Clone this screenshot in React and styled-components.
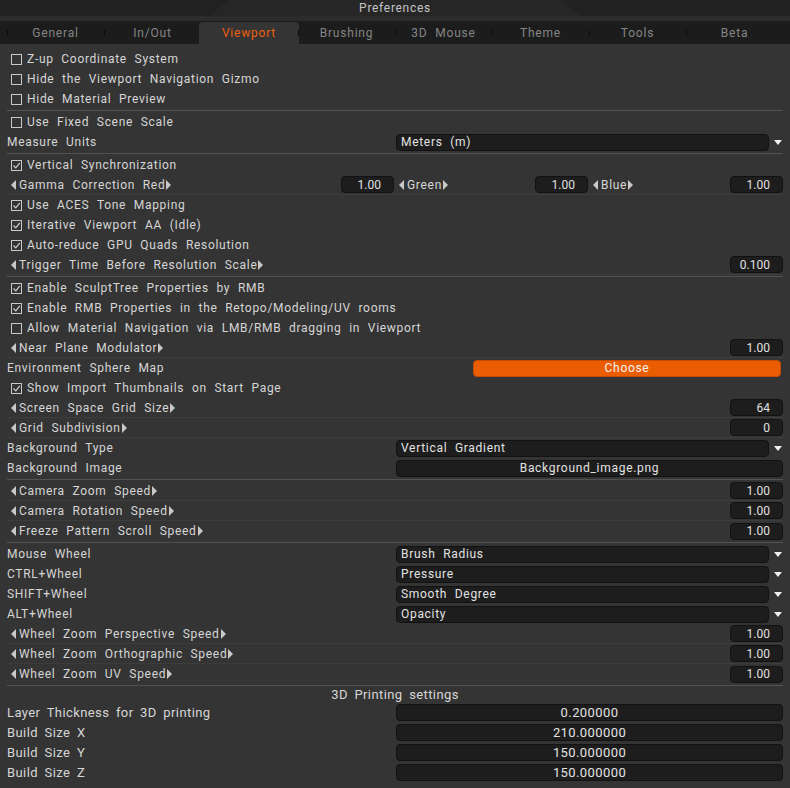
import styled, { createGlobalStyle, css } from "styled-components";

const GlobalStyle = createGlobalStyle`
  html, body {
    margin: 0;
    padding: 0;
    background: #343434;
  }
  body {
    font-family: "Roboto", "DejaVu Sans", sans-serif;
    -webkit-font-smoothing: antialiased;
  }
`;

const Window = styled.div`
  width: 790px;
  height: 788px;
  background: #343434;
  color: #d6d6d6;
  overflow: hidden;
  font-size: 12px;
  letter-spacing: 0.7px;
  word-spacing: 4px;
`;

const TitleBar = styled.div`
  height: 16px;
  background: #212121;
  display: flex;
  justify-content: center;
`;

const Title = styled.div`
  height: 16px;
  line-height: 16px;
  padding: 0 150px;
  background: #262626;
  clip-path: polygon(20px 0, calc(100% - 20px) 0, 100% 100%, 0 100%);
  color: #c4c4c4;
  font-size: 12px;
  letter-spacing: 0.7px;
`;

const TabStrip = styled.div`
  border-top: 5px solid #2c2c2c;
  height: 23px;
  background: #1c1c1c;
  display: grid;
  grid-template-columns: repeat(8, 97px);
  padding-left: 7px;
`;

const Tab = styled.div`
  position: relative;
  display: flex;
  align-items: center;
  justify-content: center;
  color: #858585;
  font-size: 12px;
  letter-spacing: 0.8px;

  &::before {
    content: "";
    position: absolute;
    left: 0;
    top: 9px;
    width: 1px;
    height: 6px;
    background: #0c0c0c;
  }

  ${(p) =>
    p.$active &&
    css`
      margin: 1px -1px 0 -2px;
      background: #343434;
      border-radius: 4px 4px 0 0;
      color: #ec600c;
      &::before {
        display: none;
      }
    `}
`;

const Content = styled.div`
  padding: 5px 7px 0 7px;
`;

const Row = styled.div`
  height: 20px;
  display: flex;
  align-items: center;
  box-sizing: border-box;
  white-space: nowrap;
  ${(p) =>
    p.$lined &&
    css`
      border-bottom: 1px solid #3c3c3c;
    `}
`;

const Separator = styled.div`
  height: 1px;
  margin: 1px 0;
  background: #525252;
`;

const Label = styled.span``;

const CheckBox = styled.span`
  width: 11px;
  height: 11px;
  box-sizing: border-box;
  border: 1px solid #c8c8c8;
  margin: 0 5px 0 4px;
  display: inline-flex;
  align-items: center;
  justify-content: center;
  flex: none;
`;

const ArrowIcon = styled.svg`
  flex: none;
  margin: ${(p) => (p.$dir === "left" ? "0 3px 0 0" : "0 0 0 1px")};
`;

const SliderName = styled.span`
  display: inline-flex;
  align-items: center;
  padding-left: ${(p) => p.$indent ?? 4}px;
`;

const ValueBox = styled.div`
  width: 53px;
  height: 17px;
  box-sizing: border-box;
  margin-left: auto;
  background: #1d1d1d;
  border: 1px solid #121212;
  border-radius: 4px;
  display: flex;
  align-items: center;
  justify-content: flex-end;
  padding-right: 12px;
  color: #e0e0e0;
  letter-spacing: 0;
  flex: none;
`;

const Split = styled.div`
  flex: 1;
  display: grid;
  grid-template-columns: 387px 189px 1fr;
  column-gap: 5px;
`;

const Segment = styled.div`
  display: flex;
  align-items: center;
`;

const Half = styled.div`
  width: 389px;
  flex: none;
`;

const Control = styled.div`
  flex: 1;
  display: flex;
  align-items: center;
  padding-left: ${(p) => p.$offset || 0}px;
`;

const Field = styled.div`
  flex: 1;
  height: 17px;
  box-sizing: border-box;
  background: #1d1d1d;
  border: 1px solid #121212;
  border-radius: 4px;
  display: flex;
  align-items: center;
  justify-content: ${(p) => (p.$center ? "center" : "flex-start")};
  padding-left: ${(p) => (p.$center ? 0 : 4)}px;
  color: #e2e2e2;
`;

const DropArrow = styled.span`
  width: 0;
  height: 0;
  margin: 0 1px 0 5px;
  border-left: 4px solid transparent;
  border-right: 4px solid transparent;
  border-top: 5px solid #f0f0f0;
`;

const OrangeButton = styled.div`
  flex: 1;
  height: 17px;
  box-sizing: border-box;
  margin-right: 2px;
  background: #ea5d03;
  border: 1px solid #c44c00;
  border-radius: 4px;
  display: flex;
  align-items: center;
  justify-content: center;
  color: #f4f4f4;
`;

const Header = styled.div`
  height: 15px;
  display: flex;
  align-items: center;
  justify-content: center;
`;

const Narrow = styled.div`
  font-size: 13px;
  letter-spacing: 0.4px;
  word-spacing: 3px;
`;

const Tick = () => (
  <svg width="9" height="9" viewBox="0 0 9 9">
    <polyline
      points="1.5,4.5 3.8,6.8 7.8,1.8"
      fill="none"
      stroke="#d0d0d0"
      strokeWidth="1.2"
    />
  </svg>
);

const Arrow = ({ dir }) => (
  <ArrowIcon $dir={dir} width="5" height="10" viewBox="0 0 5 10">
    <polygon
      points={dir === "left" ? "5,0 5,10 0,5" : "0,0 0,10 5,5"}
      fill="#c8c8c8"
    />
  </ArrowIcon>
);

const tabs = [
  "General",
  "In/Out",
  "Viewport",
  "Brushing",
  "3D Mouse",
  "Theme",
  "Tools",
  "Beta",
];

const rows = [
  { type: "check", label: "Z-up Coordinate System" },
  { type: "check", label: "Hide the Viewport Navigation Gizmo" },
  { type: "check", label: "Hide Material Preview" },
  { type: "sep" },
  { type: "check", label: "Use Fixed Scene Scale" },
  { type: "select", label: "Measure Units", value: "Meters (m)" },
  { type: "sep" },
  { type: "check", label: "Vertical Synchronization", checked: true },
  { type: "gamma" },
  { type: "check", label: "Use ACES Tone Mapping", checked: true },
  { type: "check", label: "Iterative Viewport AA (Idle)", checked: true },
  { type: "check", label: "Auto-reduce GPU Quads Resolution", checked: true },
  { type: "slider", label: "Trigger Time Before Resolution Scale", value: "0.100" },
  { type: "sep" },
  { type: "check", label: "Enable SculptTree Properties by RMB", checked: true },
  {
    type: "check",
    label: "Enable RMB Properties in the Retopo/Modeling/UV rooms",
    checked: true,
  },
  { type: "check", label: "Allow Material Navigation via LMB/RMB dragging in Viewport" },
  { type: "slider", label: "Near Plane Modulator", value: "1.00" },
  { type: "button", label: "Environment Sphere Map", value: "Choose" },
  { type: "check", label: "Show Import Thumbnails on Start Page", checked: true },
  { type: "slider", label: "Screen Space Grid Size", value: "64" },
  { type: "slider", label: "Grid Subdivision", value: "0" },
  { type: "select", label: "Background Type", value: "Vertical Gradient" },
  { type: "file", label: "Background Image", value: "Background_image.png" },
  { type: "sep" },
  { type: "slider", label: "Camera Zoom Speed", value: "1.00" },
  { type: "slider", label: "Camera Rotation Speed", value: "1.00" },
  { type: "slider", label: "Freeze Pattern Scroll Speed", value: "1.00", last: true },
  { type: "sep" },
  { type: "select", label: "Mouse Wheel", value: "Brush Radius" },
  { type: "select", label: "CTRL+Wheel", value: "Pressure" },
  { type: "select", label: "SHIFT+Wheel", value: "Smooth Degree" },
  { type: "select", label: "ALT+Wheel", value: "Opacity" },
  { type: "slider", label: "Wheel Zoom Perspective Speed", value: "1.00" },
  { type: "slider", label: "Wheel Zoom Orthographic Speed", value: "1.00" },
  { type: "slider", label: "Wheel Zoom UV Speed", value: "1.00", last: true },
  { type: "sep" },
];

const printing = [
  { label: "Layer Thickness for 3D printing", value: "0.200000" },
  { label: "Build Size X", value: "210.000000" },
  { label: "Build Size Y", value: "150.000000" },
  { label: "Build Size Z", value: "150.000000" },
];

const SliderLabel = ({ children, indent }) => (
  <SliderName $indent={indent}>
    <Arrow dir="left" />
    {children}
    <Arrow dir="right" />
  </SliderName>
);

function renderRow(row, i) {
  switch (row.type) {
    case "sep":
      return <Separator key={i} />;
    case "check":
      return (
        <Row key={i}>
          <CheckBox>{row.checked && <Tick />}</CheckBox>
          <Label>{row.label}</Label>
        </Row>
      );
    case "slider":
      return (
        <Row key={i} $lined={!row.last}>
          <SliderLabel>{row.label}</SliderLabel>
          <ValueBox>{row.value}</ValueBox>
        </Row>
      );
    case "gamma":
      return (
        <Row key={i} $lined>
          <Split>
            <Segment>
              <SliderLabel>Gamma Correction Red</SliderLabel>
              <ValueBox>1.00</ValueBox>
            </Segment>
            <Segment>
              <SliderLabel indent={0}>Green</SliderLabel>
              <ValueBox>1.00</ValueBox>
            </Segment>
            <Segment>
              <SliderLabel indent={0}>Blue</SliderLabel>
              <ValueBox>1.00</ValueBox>
            </Segment>
          </Split>
        </Row>
      );
    case "select":
      return (
        <Row key={i}>
          <Half>{row.label}</Half>
          <Control>
            <Field>{row.value}</Field>
            <DropArrow />
          </Control>
        </Row>
      );
    case "button":
      return (
        <Row key={i}>
          <Half>{row.label}</Half>
          <Control $offset={77}>
            <OrangeButton>{row.value}</OrangeButton>
          </Control>
        </Row>
      );
    case "file":
      return (
        <Row key={i}>
          <Half>{row.label}</Half>
          <Control>
            <Field $center>{row.value}</Field>
          </Control>
        </Row>
      );
    default:
      return null;
  }
}

export default function App() {
  return (
    <>
      <GlobalStyle />
      <Window>
        <TitleBar>
          <Title>Preferences</Title>
        </TitleBar>
        <TabStrip>
          {tabs.map((t) => (
            <Tab key={t} $active={t === "Viewport"}>
              {t}
            </Tab>
          ))}
        </TabStrip>
        <Content>
          {rows.map(renderRow)}
          <Narrow>
            <Header>3D Printing settings</Header>
            {printing.map((p) => (
              <Row key={p.label}>
                <Half>{p.label}</Half>
                <Control>
                  <Field $center>{p.value}</Field>
                </Control>
              </Row>
            ))}
          </Narrow>
        </Content>
      </Window>
    </>
  );
}
